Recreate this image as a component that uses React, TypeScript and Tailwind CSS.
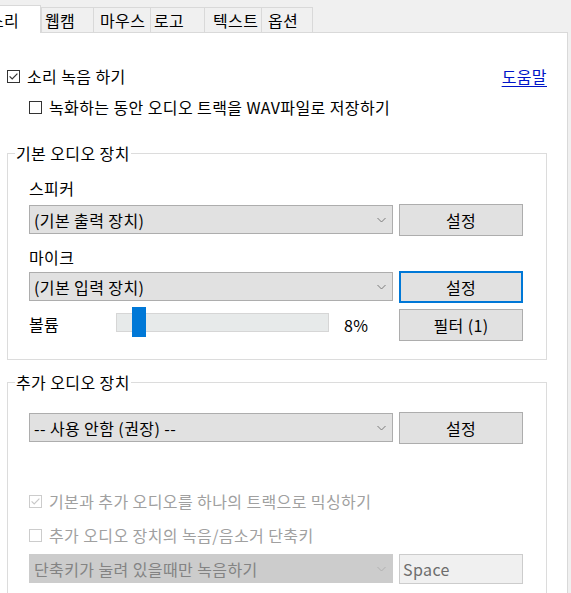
import React from 'react';

function Check({ checked, disabled }: { checked?: boolean; disabled?: boolean }) {
  return (
    <span
      className={`flex h-[13px] w-[13px] shrink-0 items-center justify-center border bg-white ${
        disabled ? 'border-[#cccccc]' : 'border-[#333333]'
      }`}
    >
      {checked && (
        <svg width="11" height="11" viewBox="0 0 11 11">
          <path
            d="M1.6 5.4 L4.2 8 L9.4 2.6"
            fill="none"
            stroke={disabled ? '#c8c8c8' : '#333333'}
            strokeWidth="1.2"
          />
        </svg>
      )}
    </span>
  );
}

function Chevron({ color = '#7a7a7a' }: { color?: string }) {
  return (
    <svg width="9" height="6" viewBox="0 0 9 6">
      <path d="M0.5 1 L4.5 5 L8.5 1" fill="none" stroke={color} strokeWidth="1" />
    </svg>
  );
}

function Select({ text, disabled }: { text: string; disabled?: boolean }) {
  return (
    <div
      className={`mt-px flex h-[29px] w-[364px] items-center justify-between border pl-[4px] pr-[6px] ${
        disabled
          ? 'border-[#cccccc] bg-[#cccccc] text-[#838383]'
          : 'border-[#adadad] bg-[#e1e1e1]'
      }`}
    >
      <span>{text}</span>
      <Chevron color={disabled ? '#b0b0b0' : '#7a7a7a'} />
    </div>
  );
}

function Button({ label, focused }: { label: string; focused?: boolean }) {
  return (
    <button
      className={`flex h-[32px] w-[124px] items-center justify-center bg-[#e1e1e1] ${
        focused ? 'border-2 border-[#0078d7]' : 'border border-[#adadad]'
      }`}
    >
      {label}
    </button>
  );
}

const tabs = [
  { label: '웹캠', cls: 'w-[52px] pl-[3px]' },
  { label: '마우스', cls: 'w-[57px] pl-[6px]' },
  { label: '로고', cls: 'w-[54px] pl-[3px]' },
  { label: '텍스트', cls: 'w-[57px] pl-[8px]' },
  { label: '옵션', cls: 'w-[52px] pl-[6px]' },
];

export default function App() {
  return (
    <div className="relative h-[593px] w-[571px] overflow-hidden bg-[#f0f0f0] text-[16px] leading-[20px] tracking-[0.4px] text-black font-['Malgun_Gothic','Noto_Sans_CJK_KR',sans-serif]">
      {/* Tabs */}
      <div className="flex h-[32px] items-end">
        <div className="relative z-10 -mb-px ml-[-20px] flex h-[28px] w-[61px] items-center border border-b-0 border-[#d9d9d9] bg-white pl-[8px]">
          소리
        </div>
        {tabs.map((t, i) => (
          <div
            key={t.label}
            className={`flex h-[25px] items-center border-t border-l border-[#d9d9d9] bg-[#f0f0f0] ${t.cls} ${
              i === tabs.length - 1 ? 'border-r' : ''
            }`}
          >
            {t.label}
          </div>
        ))}
      </div>

      {/* Panel */}
      <div className="h-[561px] w-[568px] border-t border-r border-[#d9d9d9] bg-white">
        <div className="ml-[7px] mt-[33px] flex w-[540px] items-center justify-between">
          <label className="flex items-center gap-[7px]">
            <Check checked />
            <span>소리 녹음 하기</span>
          </label>
          <a className="text-[#0014c8] underline underline-offset-[3px]">도움말</a>
        </div>
        <label className="ml-[29px] mt-[11px] flex items-center gap-[7px]">
          <Check />
          <span>녹화하는 동안 오디오 트랙을 WAV파일로 저장하기</span>
        </label>

        {/* 기본 오디오 장치 */}
        <fieldset className="ml-[7px] mt-[26px] w-[540px] border border-[#dcdcdc]">
          <legend className="ml-[7px] px-[1px]">기본 오디오 장치</legend>
          <div className="pl-[21px] pr-[23px] pb-[18px]">
            <div className="mt-[15px]">스피커</div>
            <div className="mt-[6px] flex items-start justify-between">
              <Select text="(기본 출력 장치)" />
              <Button label="설정" />
            </div>
            <div className="mt-[11px]">마이크</div>
            <div className="mt-[4px] flex items-start justify-between">
              <Select text="(기본 입력 장치)" />
              <Button label="설정" focused />
            </div>
            <div className="mt-[6px] flex items-start">
              <span className="mt-[5px] w-[87px]">볼륨</span>
              <div className="relative -mt-[2px] h-[30px] w-[213px]">
                <div className="mt-[6px] h-[19px] w-full border border-[#d6d6d6] bg-[#e7eaea]" />
                <div className="absolute left-[16px] top-0 h-[30px] w-[14px] bg-[#0078d7]" />
              </div>
              <span className="ml-[15px] mt-[6px]">8%</span>
              <div className="ml-auto">
                <Button label="필터 (1)" />
              </div>
            </div>
          </div>
        </fieldset>

        {/* 추가 오디오 장치 */}
        <fieldset className="ml-[7px] mt-[12px] w-[540px] border border-[#dcdcdc]">
          <legend className="ml-[7px] px-[1px]">추가 오디오 장치</legend>
          <div className="pl-[21px] pr-[23px] pb-[20px]">
            <div className="mt-[20px] flex items-start justify-between">
              <Select text="-- 사용 안함 (권장) --" />
              <Button label="설정" />
            </div>
            <label className="mt-[47px] flex items-center gap-[7px] text-[#a0a0a0]">
              <Check checked disabled />
              <span>기본과 추가 오디오를 하나의 트랙으로 믹싱하기</span>
            </label>
            <label className="mt-[14px] flex items-center gap-[7px] text-[#a0a0a0]">
              <Check disabled />
              <span>추가 오디오 장치의 녹음/음소거 단축키</span>
            </label>
            <div className="mt-[8px] flex items-start justify-between">
              <Select text="단축키가 눌려 있을때만 녹음하기" disabled />
              <div className="mt-px flex h-[30px] w-[124px] items-center border border-[#cccccc] bg-[#f0f0f0] pl-[3px] text-[#6d6d6d]">
                Space
              </div>
            </div>
          </div>
        </fieldset>
      </div>
    </div>
  );
}
